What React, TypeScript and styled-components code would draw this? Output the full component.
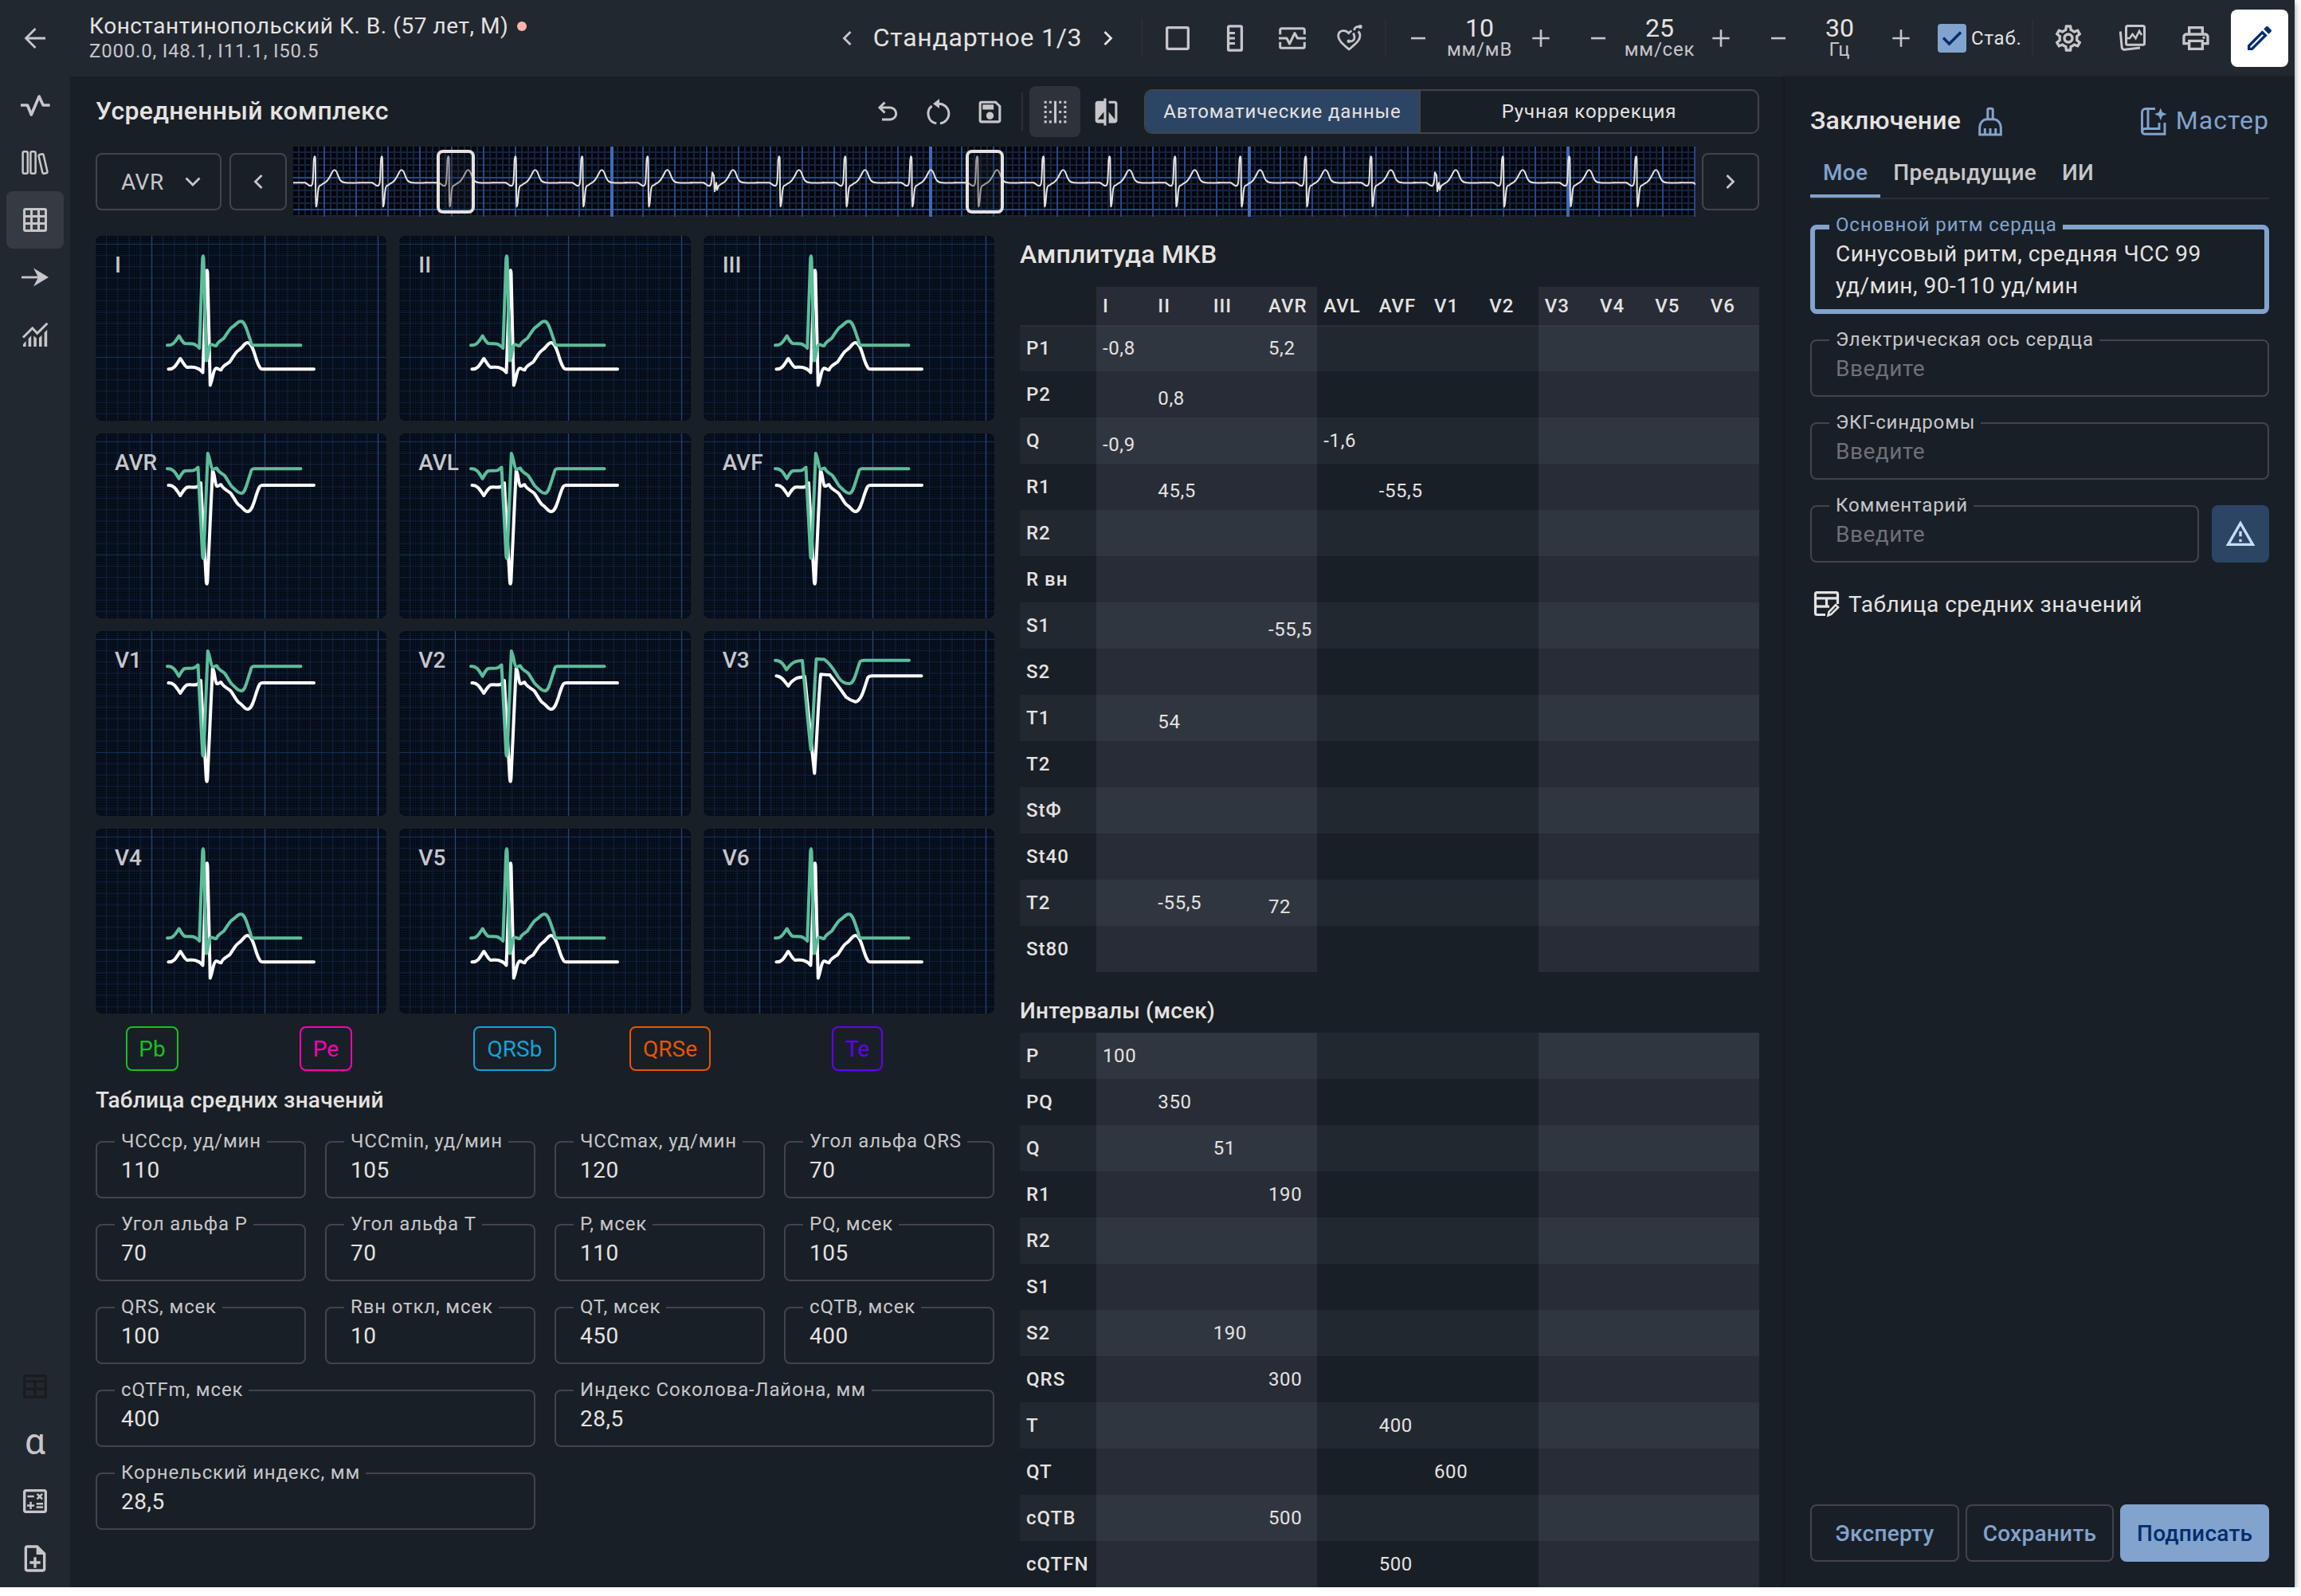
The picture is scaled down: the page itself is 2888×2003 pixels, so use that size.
import React from "react";
import styled, { createGlobalStyle, css } from "styled-components";
import {
  MdBorderVertical,
  MdCompare,
  MdOutlineCalculate,
  MdOutlineEdit,
  MdOutlineNoteAdd,
  MdOutlinePrint,
  MdOutlineSave,
  MdOutlineSettings,
  MdOutlineWarningAmber,
} from "react-icons/md";

const c = {
  bg: "#191f26",
  bar: "#222830",
  text: "#e5e2e1",
  muted: "#c7c6ca",
  hint: "#6f7078",
  line: "#44434b",
  faint: "#2e2d31",
  accent: "#82a3ce",
  accentInk: "#002d6b",
  fill: "#2c4564",
};

const Global = createGlobalStyle`
  *, *::before, *::after { box-sizing: border-box; }
  body { margin: 0; background: #fff; font-family: Roboto, "Noto Sans", sans-serif; overflow: hidden; }
  button { font: inherit; color: inherit; background: none; border: 0; padding: 0; margin: 0; }
  svg { display: block; flex: none; }
`;

/* ---------- icons ---------- */

const Glyph = styled.svg.attrs({ viewBox: "0 0 48 48" })<{ $w?: number }>`
  width: 48px;
  height: 48px;
  fill: none;
  stroke: currentColor;
  stroke-width: ${(p) => p.$w ?? 3.3};
`;

const BackIcon = () => (
  <Glyph $w={2.8}><path d="M24.5 12 12.5 24l12 12M12.5 24H37" /></Glyph>
);
const ChevronLeft = () => <Glyph $w={2.8}><path d="m28.5 16-8 8 8 8" /></Glyph>;
const ChevronRight = () => <Glyph $w={2.8}><path d="m19.5 16 8 8-8 8" /></Glyph>;
const ChevronDown = () => <Glyph $w={2.8}><path d="m15.5 19.5 8.5 8.5 8.5-8.5" /></Glyph>;
const MinusIcon = () => <Glyph $w={2.6}><path d="M15 24h18" /></Glyph>;
const PlusIcon = () => <Glyph $w={2.6}><path d="M13.3 24h21.4M24 13.3v21.4" /></Glyph>;
const PulseIcon = () => (
  <Glyph strokeLinejoin="round" $w={3.6}><path d="M6 24h8.5l4.8 12 9.8-23 5 11h8.5" /></Glyph>
);
const BooksIcon = () => (
  <Glyph $w={2.5}>
    <rect x="8.6" y="10.3" width="6.2" height="27.5" rx="1.8" />
    <rect x="18.4" y="10.3" width="6.2" height="27.5" rx="1.8" />
    <rect x="30.9" y="13.4" width="6.2" height="24.4" rx="1.8" transform="rotate(-13 34 25.6)" />
  </Glyph>
);
const GridIcon = () => (
  <Glyph>
    <path
      stroke="none"
      fill="currentColor"
      fillRule="evenodd"
      d="M12 9h24a3 3 0 0 1 3 3v24a3 3 0 0 1-3 3H12a3 3 0 0 1-3-3V12a3 3 0 0 1 3-3zm0 3v6h6v-6zm9 0v6h6v-6zm9 0v6h6v-6zm-18 9v6h6v-6zm9 0v6h6v-6zm9 0v6h6v-6zm-18 9v6h6v-6zm9 0v6h6v-6zm9 0v6h6v-6z"
    />
  </Glyph>
);
const ArrowIcon = () => (
  <Glyph $w={2.8}>
    <path d="M7 24h24" />
    <path stroke="none" fill="currentColor" d="M41 24 22 12.5 28 24l-6 11.5z" />
  </Glyph>
);
const ChartIcon = () => (
  <Glyph $w={3}>
    <path d="m9 27.5 11.7-11.7 6 6.5L39.4 9.8" />
    <path stroke="none" fill="currentColor" d="M9 36l3.6-4v7H9zM15.6 29l3.6-3.8V39h-3.6zM22.3 25.5l3.5 3V39h-3.5zM29 28l3.5-3.5V39H29zM35.6 21.5l3.6-3.8V39h-3.6z" />
  </Glyph>
);
const TableIcon = () => (
  <Glyph>
    <path
      stroke="none"
      fill="currentColor"
      fillRule="evenodd"
      d="M11.5 9h25a2.5 2.5 0 0 1 2.5 2.5v25a2.5 2.5 0 0 1-2.5 2.5h-25A2.5 2.5 0 0 1 9 36.5v-25A2.5 2.5 0 0 1 11.5 9zM12.2 12.2v4h23.6v-4zm0 6.8v6.8h10.2V19zm13.4 0v6.8h10.2V19zM12.2 29v6.8h10.2V29zm13.4 0v6.8h10.2V29z"
    />
  </Glyph>
);
const SquareIcon = () => <Glyph><rect x="10.65" y="10.65" width="26.7" height="26.7" rx="1.5" /></Glyph>;
const RulerIcon = () => (
  <Glyph>
    <rect x="15.6" y="8.8" width="16.8" height="30.4" rx="1.5" />
    <path strokeWidth="2.8" d="M16 17.5h8M16 24h8M16 30.5h8" />
  </Glyph>
);
const MonitorIcon = () => (
  <Glyph strokeLinejoin="round" $w={3}>
    <path d="M8.7 19.3V13.5a1.7 1.7 0 0 1 1.7-1.7h27.2a1.7 1.7 0 0 1 1.7 1.7v5.8M8.7 28.7v5.8a1.7 1.7 0 0 0 1.7 1.7h27.2a1.7 1.7 0 0 0 1.7-1.7v-5.8" />
    <path d="M7 24h10l3.5 7L27 17.5l3.5 6.5H41" />
  </Glyph>
);
const HeartIcon = () => (
  <Glyph strokeLinejoin="round" $w={2.8}>
    <path d="M26.5 14.8c-1.8.7-3 1.8-3.8 3-3.200-4.900-13-4.500-13 3.500 0 5.500 5.500 9.800 13.500 16.700C31 31.200 37 27 37 20.800c0-2.400-.9-4.200-2.400-5.300" />
    <path d="M28.5 17.5c1.5 3 2 6 .8 8.200-1 1.800-2.800 2.300-5 2.300M29.500 14c.5-2.800 2.300-4.600 6-4.600" />
    <circle cx="22.8" cy="27.7" r="2.2" fill="currentColor" stroke="none" />
    <circle cx="37.2" cy="9.6" r="2.5" fill="currentColor" stroke="none" />
  </Glyph>
);
const PicturesIcon = () => (
  <Glyph $w={3}>
    <rect x="16.5" y="8.6" width="23" height="23.6" rx="2" />
    <path d="M17 24h4l3.500-5 4 5 4.500-9 3 5" strokeWidth="2.6" />
    <path d="M9.300 15.500l1.900 20a3 3 0 0 0 3.400 2.700L34 36" />
  </Glyph>
);
const UndoIcon = () => (
  <Glyph $w={3}><path d="m20.500 12.500-6.500 6.500 6.500 6.500M14 19h13.200a7.500 7.500 0 0 1 0 15H17" /></Glyph>
);
const RestartIcon = () => (
  <Glyph $w={2.9}>
    <path d="M24 14.200A12.400 12.400 0 0 1 26 38.900M21.300 38.900A12.400 12.400 0 0 1 15.600 17" />
    <path stroke="none" fill="currentColor" d="M17 14.200 25 8v12z" />
  </Glyph>
);
const BrushIcon = () => (
  <Glyph $w={3}>
    <path d="M20.800 21.500V9.700a1.500 1.500 0 0 1 1.500-1.500h3.400a1.500 1.500 0 0 1 1.500 1.500v11.800" />
    <path d="M10.700 41V31.500c0-5 4.300-9.700 9-9.700h8.600c4.700 0 9 4.700 9 9.700V41z" />
    <path d="M17.300 33v7M24 33v7M30.700 33v7" />
  </Glyph>
);
const WizardIcon = () => (
  <Glyph $w={2.9}>
    <path d="M26 8.500H14a4.500 4.500 0 0 0-4.500 4.500v23.500A3.800 3.800 0 0 0 13.300 40.300H38V26" />
    <path d="M17 9v24M31 26v7.500H13.300a3.500 3.500 0 0 0-3.500 3.400" />
    <path stroke="none" fill="currentColor" d="m32.800 7.500 2.200 5.600 5.500 2.100-5.500 2.200-2.200 5.600-2.200-5.600-5.500-2.200 5.500-2.100z" />
  </Glyph>
);
const TableEditIcon = () => (
  <Glyph $w={3.2}>
    <path d="M22 37.500H11.500a2 2 0 0 1-2-2V11.600a2 2 0 0 1 2-2h24a2 2 0 0 1 2 2V24M9.500 16.800h28M9.500 27.200H27M23.500 17v10" />
    <path d="m25.500 38.500 1-4.500 8.500-8.800 3 3-8.700 8.800z" strokeWidth="2.6" />
  </Glyph>
);

/* ---------- shell ---------- */

const Frame = styled.div`
  width: 2880px;
  height: 1992px;
  display: grid;
  grid-template-rows: 96px 1896px;
  background: ${c.bg};
  color: ${c.text};
  white-space: nowrap;
  box-shadow: 0 3px 8px rgba(0, 0, 0, 0.45);
`;

const Header = styled.header`
  display: flex;
  align-items: center;
  background: ${c.bar};
`;

const Body = styled.div`
  display: grid;
  grid-template-columns: 88px 2152px 640px;
  min-height: 0;
`;

const IconButton = styled.button<{ $w?: number; $tone?: "on" | "solid" | "blue" | "ghost" | "light"; $h?: number }>`
  width: ${(p) => p.$w ?? 72}px;
  height: ${(p) => p.$h ?? 72}px;
  flex: none;
  display: flex;
  align-items: center;
  justify-content: center;
  border-radius: 8px;
  color: ${c.muted};
  ${(p) => p.$tone === "on" && css`background: ${p.$h ? "#2d323b" : "#363a43"};`}
  ${(p) => p.$tone === "light" && css`color: ${c.text};`}
  ${(p) => p.$tone === "solid" && css`background: #fff; color: ${c.accentInk};`}
  ${(p) => p.$tone === "blue" && css`background: ${c.fill}; color: #c9dcfb;`}
  ${(p) => p.$tone === "ghost" && css`color: #1b1b20;`}
`;

const Bordered = styled(IconButton)`
  border: 2px solid ${c.line};
`;

const Divider = styled.i<{ $gap: string }>`
  width: 2px;
  height: 48px;
  flex: none;
  margin: ${(p) => p.$gap};
  background: ${c.faint};
`;

const Patient = styled.div`
  align-self: flex-start;
  width: 915px;
  margin-left: 24px;
  padding-top: 17px;
`;

const PatientName = styled.div`
  display: flex;
  align-items: center;
  gap: 11px;
  font-size: 28px;
  line-height: 32px;
  letter-spacing: 0.54px;
`;

const Dot = styled.i`
  width: 12px;
  height: 12px;
  border-radius: 50%;
  background: #ffb4ab;
`;

const PatientCodes = styled.div`
  margin-top: 1px;
  font-size: 24px;
  line-height: 28px;
  letter-spacing: 0.8px;
  color: ${c.muted};
`;

const ViewName = styled.div`
  width: 256px;
  padding-bottom: 2px;
  display: flex;
  justify-content: center;
  font-size: 32px;
  letter-spacing: 0.75px;
`;

const Measure = styled.div`
  align-self: flex-start;
  width: 82px;
  padding-top: 21px;
  display: flex;
  flex-direction: column;
  align-items: center;
`;

const MeasureValue = styled.b`
  font-weight: 400;
  font-size: 32px;
  line-height: 29px;
`;

const MeasureUnit = styled.span`
  font-size: 24px;
  line-height: 24px;
  letter-spacing: 0.8px;
  color: ${c.muted};
`;

const Check = styled.label`
  width: 118px;
  margin-left: 10px;
  display: flex;
  align-items: center;
  gap: 6px;
  font-size: 24px;
  letter-spacing: 0.8px;
`;

const CheckBox = styled.svg`
  width: 36px;
  height: 36px;
  border-radius: 4px;
  background: ${c.accent};
  fill: none;
  stroke: ${c.accentInk};
  stroke-width: 3.4;
`;

const Tools = styled.div`
  display: flex;
  gap: 8px;
`;

const Sidebar = styled.nav`
  display: flex;
  flex-direction: column;
  justify-content: space-between;
  align-items: center;
  background: ${c.bar};
`;

const Alpha = styled.span`
  padding-bottom: 7px;
  font-size: 46px;
  line-height: 40px;
`;

/* ---------- main area ---------- */

const Main = styled.main`
  padding: 12px 32px 0;
  min-width: 0;
`;

const ToolRow = styled.div`
  display: flex;
  align-items: center;
  height: 64px;
`;

const PageTitle = styled.h1`
  width: 962px;
  margin: 0;
  padding-bottom: 2px;
  font-size: 32px;
  font-weight: 500;
  letter-spacing: 0.3px;
`;

const Segments = styled.div`
  width: 772px;
  height: 56px;
  margin-left: 16px;
  display: grid;
  grid-template-columns: 343px 1fr;
  border: 2px solid ${c.line};
  border-radius: 10px;
  overflow: hidden;
`;

const Segment = styled.button<{ $on?: boolean }>`
  font-size: 24px;
  letter-spacing: 0.85px;
  background: ${(p) => (p.$on ? c.fill : "none")};
  border-left: ${(p) => (p.$on ? "0" : `2px solid ${c.line}`)};
`;

const StripRow = styled.div`
  display: grid;
  grid-template-columns: 160px 72px 1760px 72px;
  column-gap: 8px;
  align-items: center;
  margin-top: 12px;
  height: 88px;
`;

const LeadSelect = styled.button`
  width: 158px;
  height: 72px;
  padding: 0 10px 0 30px;
  display: flex;
  align-items: center;
  justify-content: space-between;
  border: 2px solid ${c.line};
  border-radius: 8px;
  font-size: 28px;
  letter-spacing: 0.5px;
  color: ${c.muted};
`;

const StripBox = styled.div`
  position: relative;
  width: 1760px;
  height: 88px;
  background: #03060c;
`;

const Marker = styled.i<{ $x: number }>`
  position: absolute;
  top: 4px;
  left: ${(p) => p.$x}px;
  width: 48px;
  height: 80px;
  border: 4px solid ${c.text};
  border-radius: 8px;
  background: rgba(28, 29, 36, 0.35);
`;

const Columns = styled.div`
  margin-top: 24px;
  display: grid;
  grid-template-columns: 1128px 928px;
  column-gap: 32px;
`;

const Leads = styled.div`
  display: grid;
  grid-template-columns: repeat(3, 1fr);
  grid-auto-rows: 232px;
  gap: 16px;
`;

const LeadCard = styled.div`
  position: relative;
  border-radius: 8px;
  overflow: hidden;
  background: #02050b;
`;

const LeadName = styled.span`
  position: absolute;
  left: 24px;
  top: 21px;
  font-size: 28px;
  line-height: 32px;
  font-weight: 500;
  color: ${c.muted};
`;

const Chips = styled.div`
  display: flex;
  margin-top: 16px;
  height: 56px;
`;

const Chip = styled.button<{ $color: string; $gap: number; $w: number }>`
  width: ${(p) => p.$w}px;
  margin-left: ${(p) => p.$gap}px;
  border: 2px solid ${(p) => p.$color};
  border-radius: 8px;
  color: ${(p) => p.$color};
  font-size: 28px;
`;

const Heading = styled.h2<{ $size: number; $top: number; $bottom: number }>`
  margin: ${(p) => `${p.$top}px 0 ${p.$bottom}px`};
  font-size: ${(p) => p.$size}px;
  line-height: 40px;
  font-weight: 500;
  letter-spacing: 0.22px;
`;

const Fields = styled.div`
  display: grid;
  grid-template-columns: repeat(4, 264px);
  gap: 32px 24px;
`;

const FieldBox = styled.div<{ $span?: number; $active?: boolean }>`
  position: relative;
  grid-column: span ${(p) => p.$span ?? 1};
  border: ${(p) => (p.$active ? `6px solid ${c.accent}` : `2px solid ${c.line}`)};
  border-radius: 8px;
  padding: ${(p) => (p.$active ? "11px 26px 9px" : "15px 30px 13px")};
  font-size: 28px;
  line-height: 40px;
`;

const FieldLabel = styled.span<{ $active?: boolean }>`
  position: absolute;
  top: ${(p) => (p.$active ? -20 : -16)}px;
  left: ${(p) => (p.$active ? 18 : 22)}px;
  padding: 0 7px 0 8px;
  background: ${c.bg};
  font-size: 24px;
  line-height: 28px;
  letter-spacing: 0.85px;
  color: ${(p) => (p.$active ? c.accent : c.muted)};
`;

const FieldValue = styled.div<{ $hint?: boolean }>`
  white-space: pre-line;
  letter-spacing: 0.5px;
  color: ${(p) => (p.$hint ? c.hint : c.text)};
`;

const Table = styled.div`
  display: flex;
  flex-direction: column;
  font-size: 24px;
`;

const Row = styled.div<{ $h?: number }>`
  display: grid;
  grid-template-columns: 96px repeat(12, 1fr);
  height: ${(p) => p.$h ?? 58}px;
  line-height: ${(p) => p.$h ?? 58}px;
`;

const Cell = styled.div<{ $shade: boolean; $odd: boolean; $bold?: boolean; $drop?: boolean; $rule?: boolean }>`
  padding-left: 8px;
  padding-top: ${(p) => (p.$drop ? 5 : 0)}px;
  min-width: 0;
  height: 100%;
  background: ${(p) => (p.$odd ? (p.$shade ? "#303640" : c.bar) : p.$shade ? "#272c36" : c.bg)};
  font-weight: ${(p) => (p.$bold ? 500 : 400)};
  letter-spacing: ${(p) => (p.$bold ? 1 : 0.6)}px;
  ${(p) => p.$rule && css`box-shadow: inset 0 2px ${p.$shade ? "#38383e" : "#2c2d30"};`}
`;

/* ---------- conclusion panel ---------- */

const Panel = styled.aside`
  display: flex;
  flex-direction: column;
  padding: 28px 32px 32px;
  box-shadow: -2px 0 3px rgba(0, 0, 0, 0.18);
`;

const PanelTop = styled.div`
  display: flex;
  align-items: center;
  height: 56px;
  font-size: 32px;
`;

const PanelTitle = styled.h2`
  margin: 0 13px 0 0;
  padding-bottom: 2px;
  width: 189px;
  font-size: 32px;
  font-weight: 500;
  letter-spacing: 0.2px;
`;

const Accent = styled.span`
  color: ${c.accent};
`;

const Wizard = styled.button`
  margin-left: auto;
  display: flex;
  align-items: center;
  gap: 4px;
  color: ${c.accent};
  letter-spacing: 1px;
`;

const WizardText = styled.span`
  padding-bottom: 2px;
`;

const Tabs = styled.div`
  display: flex;
  height: 70px;
  margin-bottom: 32px;
  border-bottom: 2px solid ${c.faint};
`;

const Tab = styled.button<{ $on?: boolean }>`
  height: 68px;
  padding: 8px 16px 0;
  font-size: 28px;
  font-weight: 500;
  letter-spacing: 0.3px;
  color: ${(p) => (p.$on ? c.accent : c.muted)};
  border-bottom: 4px solid ${(p) => (p.$on ? c.accent : "transparent")};
`;

const FormStack = styled.div`
  display: flex;
  flex-direction: column;
  gap: 32px;
`;

const CommentRow = styled.div`
  display: grid;
  grid-template-columns: 488px 72px;
  gap: 16px;
`;

const TableLink = styled.button`
  display: flex;
  align-items: center;
  gap: 3px;
  margin: 28px 0 0 -3px;
  font-size: 28px;
  letter-spacing: 0.52px;
`;

const Actions = styled.div`
  margin-top: auto;
  display: grid;
  grid-template-columns: repeat(3, 1fr);
  gap: 8px;
`;

const Action = styled.button<{ $primary?: boolean }>`
  height: 72px;
  border: 2px solid ${(p) => (p.$primary ? c.accent : c.line)};
  border-radius: 8px;
  background: ${(p) => (p.$primary ? c.accent : "none")};
  color: ${(p) => (p.$primary ? c.accentInk : c.accent)};
  font-size: 28px;
  font-weight: 500;
  letter-spacing: 0.28px;
`;

/* ---------- charts ---------- */

const Plot = styled.svg<{ $w: string }>`
  width: ${(p) => p.$w};
  height: 100%;
  fill: none;
  stroke-linejoin: round;
  stroke-linecap: round;
`;

const recovery = "4 9 1.7 12 .5C17 -1.5 20 -9 22 -13C24 -17 26 -17 28 -13C31 -5 32 0 39 0C45 .5 52 0 56 0";
const beat = (x: number, small: boolean) => (
  <path
    key={x}
    transform={`translate(${x} 45.3)`}
    d={
      small
        ? `M-28 0H-12C-9 1 -8 4 -5 4C-3 4 -2 2 -1 -13L1 -9L2 11L4 0L5 9L7 3.5C8 ${recovery}`
        : `M-28 0H-12C-9 1 -8 4 -5 4C-2 4 -2 0 -1 -28C0 -36 1 -33 1 -28C1.5 0 1 20 2 30C4 30 3 4 7 3.5C8 ${recovery}`
    }
  />
);

const peaks = [
  26.8, 111, 194.5, 278.7, 362.3, 444.5, 527, 609.7, 692.6, 775.3, 858.3, 941.3, 1024.4, 1106.5,
  1188.5, 1270.5, 1352.6, 1434, 1518, 1601.4, 1685.3, 1769,
];

const Strip = () => (
  <StripBox>
    <Plot $w="1760px">
      <defs>
        <pattern id="fine" width="8" height="8" patternUnits="userSpaceOnUse">
          <path d="M6 0h2v8H6zM0 6h8v2H0z" fill="#14243e" />
        </pattern>
        <pattern id="mid" width="40" height="40" patternUnits="userSpaceOnUse">
          <path d="M38 0h2v40h-2zM0 38h40v2H0z" fill="#27478a" />
        </pattern>
      </defs>
      <rect width="1760" height="88" fill="url(#fine)" />
      <rect width="1760" height="88" fill="url(#mid)" />
      {[398, 798, 1198, 1598].map((x) => (
        <rect key={x} x={x} width="4" height="88" fill="#3f6ab8" />
      ))}
      <g stroke={c.text} strokeWidth="2">
        {peaks.map((x) => beat(x, x === 527 || x === 1434))}
      </g>
    </Plot>
    <Marker $x={180} />
    <Marker $x={844} />
  </StripBox>
);

type Shape = "up" | "down" | "v3";

const waves: Record<Shape, { green: string; white: string }> = {
  up: {
    green:
      "M90 137.3C98 138 101 131 104.6 125.5C107 129 109 134 112 135C117 135.5 121 134.5 124 136C127 138 129 139 130.3 141L134.2 29C134.6 24 135.3 24 135.6 29L139 156.7C142 148 142 138 144.4 136.7C147 136 149 138 151.5 138C153 133 158 131 161 128.5C167 119 169 116 171.4 114.5C176 112 178 107.3 182 107.3C188 107 190 120 194.4 131C195 136 196 137.3 198 137.3H257.5",
    white:
      "M91.5 167.3C99 168 102 160 106.3 154C110 159 112 164 115 165C120 165 124 164 127 166C131 167 132 169 134.5 171.5L139.1 47C139.4 42 140.3 42 140.5 47L143.8 187.5C147.500 178 147.500 168 151 166.3C154 166 155 168.5 157.5 168.3C160 162 165 161 168.5 158C174.500 149 176.500 145 179.500 143.500C184 141 186.500 134.500 190.500 134C198 134 200 155 205.500 164C206.500 166.500 207 167.300 210 167.300H274",
  },
  down: {
    green:
      "M90 44.3C98 43.5 101 51 104.6 56.7C107 52 109 48 112 47C117 46.5 121 47.5 124 46C126 45 127 44 128.5 42.5L134.2 153C134.6 158 135.3 158 135.6 153L140.8 25C144 32 144.5 44 147 45C149 45 150 43.5 152 43.5C154 49 159 50 162 53C167 60 169 65 171.4 67C176 71 178 75 183 75C188 75 190 62 194.4 50C195 45.5 196 44.3 199 44.3H257.5",
    white:
      "M91.5 65C99 64.5 102 72 106.3 78C110 72 112 68.5 115 67.5C120 67 124 68 127.5 67L132 62L138.8 185C139.2 190 140 190 140.400 185L146.800 46C149.800 52 149.800 64 152 66C154.500 67 155.500 64 157.500 64.300C160 70 165 71 169.500 75C174.500 82 176.500 87 179.500 89.500C184.500 92 186.500 98 190.500 98C198 98 200 78 205.500 67.500C206.500 65.500 207 65 210 65H274",
  },
  v3: {
    green:
      "M90 36.7C98 36.7 101 43 104 48.6C108 43 111 40 115 38.5C118 37.5 121 37 124 37C128 80 132 125 134.7 149C137.5 120 139 70 141.6 35C145 35.5 148 35.5 151.5 35.6C160 41 164 50 170 59C174 65 178 66 183 66C190 66 192 48 196.7 38C198 37 199 36.7 201 36.7H258",
    white:
      "M91.5 56.3C99 57 102 64 106.4 69C110 63 113 61 117 59C121 58 124 58 127 57C131 95 136 150 139.3 178.500C142 140 144 90 147 54.3C151 54.5 154 55 158.4 55C165 63 172 73 179 83C184 87 188 88 191 88.8C199 87 202 70 206.4 58C207.5 56.8 209 56.5 211 56.3H273.5",
  },
};

const Lead = ({ name, shape }: { name: string; shape: Shape }) => (
  <LeadCard>
    <Plot $w="100%">
      <defs>
        <pattern id="thin" width="2.84" height="2.84" y="-.7" patternUnits="userSpaceOnUse">
          <path d="M0 .5H2.84M.5 0V2.84" stroke="#0a162a" strokeWidth=".85" />
        </pattern>
        <pattern id="cell" x="-1" y="-4.5" width="14.2" height="14.2" patternUnits="userSpaceOnUse">
          <path d="M.5 0V14.2M0 .7H14.2" stroke="#10203d" strokeWidth="1" />
        </pattern>
      </defs>
      <rect width="100%" height="100%" fill="url(#thin)" />
      <rect width="100%" height="100%" fill="url(#cell)" />
      <path d="M0 10.5H370M0 152.5H370" stroke="#162d52" strokeWidth="1" />
      <path d="M70.5 0V232M212.5 0V232M354.5 0V232" stroke="#28447a" strokeWidth="1.2" />
      <path d={waves[shape].white} stroke="#fff" strokeWidth="4" />
      <path d={waves[shape].green} stroke="#5cbd9a" strokeWidth="4" />
    </Plot>
    <LeadName>{name}</LeadName>
  </LeadCard>
);

/* ---------- data ---------- */

const leads: [string, Shape][] = [
  ["I", "up"], ["II", "up"], ["III", "up"],
  ["AVR", "down"], ["AVL", "down"], ["AVF", "down"],
  ["V1", "down"], ["V2", "down"], ["V3", "v3"],
  ["V4", "up"], ["V5", "up"], ["V6", "up"],
];

const chips: [string, string, number, number][] = [
  ["Pb", "#1abf20", 38, 66],
  ["Pe", "#ff00b4", 152, 66],
  ["QRSb", "#12a3d8", 152, 104],
  ["QRSe", "#e85600", 92, 102],
  ["Te", "#6200ff", 152, 64],
];

const averages: [string, string, number?][] = [
  ["ЧССср, уд/мин", "110"], ["ЧССmin, уд/мин", "105"], ["ЧССmax, уд/мин", "120"], ["Угол альфа QRS", "70"],
  ["Угол альфа P", "70"], ["Угол альфа T", "70"], ["P, мсек", "110"], ["PQ, мсек", "105"],
  ["QRS, мсек", "100"], ["Rвн откл, мсек", "10"], ["QT, мсек", "450"], ["cQTB, мсек", "400"],
  ["cQTFm, мсек", "400", 2], ["Индекс Соколова-Лайона, мм", "28,5", 2],
  ["Корнельский индекс, мм", "28,5", 2],
];

type Entry = [col: number, value: string, drop?: boolean];
type Line = [label: string, ...entries: Entry[]];

const amplitude: Line[] = [
  ["P1", [0, "-0,8"], [3, "5,2"]],
  ["P2", [1, "0,8", true]],
  ["Q", [0, "-0,9", true], [4, "-1,6"]],
  ["R1", [1, "45,5", true], [5, "-55,5", true]],
  ["R2"],
  ["R вн"],
  ["S1", [3, "-55,5", true]],
  ["S2"],
  ["T1", [1, "54", true]],
  ["T2"],
  ["StФ"],
  ["St40"],
  ["T2", [1, "-55,5"], [3, "72", true]],
  ["St80"],
];

const intervals: Line[] = [
  ["P", [0, "100"]],
  ["PQ", [1, "350"]],
  ["Q", [2, "51"]],
  ["R1", [3, "190"]],
  ["R2"],
  ["S1"],
  ["S2", [2, "190"]],
  ["QRS", [3, "300"]],
  ["T", [5, "400"]],
  ["QT", [6, "600"]],
  ["cQTB", [3, "500"]],
  ["cQTFN", [5, "500"]],
];

const columns = leads.map(([name]) => name);
const shaded = (col: number) => col < 4 || col > 7;

const Grid = ({ lines, rule }: { lines: Line[]; rule?: boolean }) => (
  <>
    {lines.map(([label, ...entries], i) => (
      <Row key={i}>
        <Cell $shade={false} $odd={i % 2 === 0} $bold $rule={rule && i === 0}>{label}</Cell>
        {columns.map((name, col) => {
          const entry = entries.find(([at]) => at === col);
          return (
            <Cell key={name} $shade={shaded(col)} $odd={i % 2 === 0} $drop={entry?.[2]} $rule={rule && i === 0}>
              {entry?.[1]}
            </Cell>
          );
        })}
      </Row>
    ))}
  </>
);

const Field = ({ label, value, hint, active, span }: {
  label: string; value: string; hint?: boolean; active?: boolean; span?: number;
}) => (
  <FieldBox $span={span} $active={active}>
    <FieldLabel $active={active}>{label}</FieldLabel>
    <FieldValue $hint={hint}>{value}</FieldValue>
  </FieldBox>
);

const Stepper = ({ value, unit }: { value: string; unit: string }) => (
  <>
    <IconButton><MinusIcon /></IconButton>
    <Measure>
      <MeasureValue>{value}</MeasureValue>
      <MeasureUnit>{unit}</MeasureUnit>
    </Measure>
    <IconButton><PlusIcon /></IconButton>
  </>
);

export default function App() {
  return (
    <Frame>
      <Global />
      <Header>
        <IconButton $w={88}><BackIcon /></IconButton>
        <Patient>
          <PatientName>Константинопольский К. В. (57 лет, М)<Dot /></PatientName>
          <PatientCodes>Z000.0, I48.1, I11.1, I50.5</PatientCodes>
        </Patient>
        <IconButton><ChevronLeft /></IconButton>
        <ViewName>Стандартное 1/3</ViewName>
        <IconButton $tone="light"><ChevronRight /></IconButton>
        <Divider $gap="0 8px 0 5px" />
        <IconButton><SquareIcon /></IconButton>
        <IconButton><RulerIcon /></IconButton>
        <IconButton><MonitorIcon /></IconButton>
        <IconButton><HeartIcon /></IconButton>
        <Divider $gap="0 4px 0 8px" />
        <Stepper value="10" unit="мм/мВ" />
        <Stepper value="25" unit="мм/сек" />
        <Stepper value="30" unit="Гц" />
        <Check>
          <CheckBox viewBox="0 0 36 36"><path d="m7 17.5 7.5 7.5L29 10.5" /></CheckBox>
          Стаб.
        </Check>
        <Divider $gap="0 8px 0 0" />
        <Tools>
          <IconButton><MdOutlineSettings size={40} /></IconButton>
          <IconButton><PicturesIcon /></IconButton>
          <IconButton><MdOutlinePrint size={40} /></IconButton>
          <IconButton $tone="solid"><MdOutlineEdit size={40} /></IconButton>
        </Tools>
      </Header>

      <Body>
        <Sidebar>
          <div>
            <IconButton><PulseIcon /></IconButton>
            <IconButton><BooksIcon /></IconButton>
            <IconButton $tone="on"><GridIcon /></IconButton>
            <IconButton><ArrowIcon /></IconButton>
            <IconButton><ChartIcon /></IconButton>
          </div>
          <div>
            <IconButton $tone="ghost"><TableIcon /></IconButton>
            <IconButton><Alpha>α</Alpha></IconButton>
            <IconButton><MdOutlineCalculate size={40} /></IconButton>
            <IconButton><MdOutlineNoteAdd size={40} /></IconButton>
          </div>
        </Sidebar>

        <Main>
          <ToolRow>
            <PageTitle>Усредненный комплекс</PageTitle>
            <IconButton $w={64} $h={64}><UndoIcon /></IconButton>
            <IconButton $w={64} $h={64}><RestartIcon /></IconButton>
            <IconButton $w={64} $h={64}><MdOutlineSave size={37} /></IconButton>
            <Divider $gap="0 8px" />
            <IconButton $w={64} $h={64} $tone="on"><MdBorderVertical size={37} /></IconButton>
            <IconButton $w={64} $h={64}><MdCompare size={37} /></IconButton>
            <Segments>
              <Segment $on>Автоматические данные</Segment>
              <Segment>Ручная коррекция</Segment>
            </Segments>
          </ToolRow>

          <StripRow>
            <LeadSelect>AVR<ChevronDown /></LeadSelect>
            <Bordered><ChevronLeft /></Bordered>
            <Strip />
            <Bordered><ChevronRight /></Bordered>
          </StripRow>

          <Columns>
            <section>
              <Leads>
                {leads.map(([name, shape]) => <Lead key={name} name={name} shape={shape} />)}
              </Leads>
              <Chips>
                {chips.map(([text, color, gap, w]) => (
                  <Chip key={text} $color={color} $gap={gap} $w={w}>{text}</Chip>
                ))}
              </Chips>
              <Heading $size={28} $top={17} $bottom={31}>Таблица средних значений</Heading>
              <Fields>
                {averages.map(([label, value, span]) => (
                  <Field key={label} label={label} value={value} span={span} />
                ))}
              </Fields>
            </section>

            <section>
              <Heading $size={32} $top={3} $bottom={21}>Амплитуда МКВ</Heading>
              <Table>
                <Row $h={48}>
                  <Cell $shade={false} $odd={false} />
                  {columns.map((name, col) => (
                    <Cell key={name} $shade={shaded(col)} $odd={false} $bold>{name}</Cell>
                  ))}
                </Row>
                <Grid lines={amplitude} rule />
              </Table>
              <Heading $size={28} $top={29} $bottom={7}>Интервалы (мсек)</Heading>
              <Table>
                <Grid lines={intervals} />
              </Table>
            </section>
          </Columns>
        </Main>

        <Panel>
          <PanelTop>
            <PanelTitle>Заключение</PanelTitle>
            <Accent><BrushIcon /></Accent>
            <Wizard><WizardIcon /><WizardText>Мастер</WizardText></Wizard>
          </PanelTop>
          <Tabs>
            <Tab $on>Мое</Tab>
            <Tab>Предыдущие</Tab>
            <Tab>ИИ</Tab>
          </Tabs>
          <FormStack>
            <Field active label="Основной ритм сердца" value={"Синусовый ритм, средняя ЧСС 99\nуд/мин, 90-110 уд/мин"} />
            <Field hint label="Электрическая ось сердца" value="Введите" />
            <Field hint label="ЭКГ-синдромы" value="Введите" />
            <CommentRow>
              <Field hint label="Комментарий" value="Введите" />
              <IconButton $tone="blue"><MdOutlineWarningAmber size={40} /></IconButton>
            </CommentRow>
          </FormStack>
          <TableLink><TableEditIcon />Таблица средних значений</TableLink>
          <Actions>
            <Action>Эксперту</Action>
            <Action>Сохранить</Action>
            <Action $primary>Подписать</Action>
          </Actions>
        </Panel>
      </Body>
    </Frame>
  );
}
